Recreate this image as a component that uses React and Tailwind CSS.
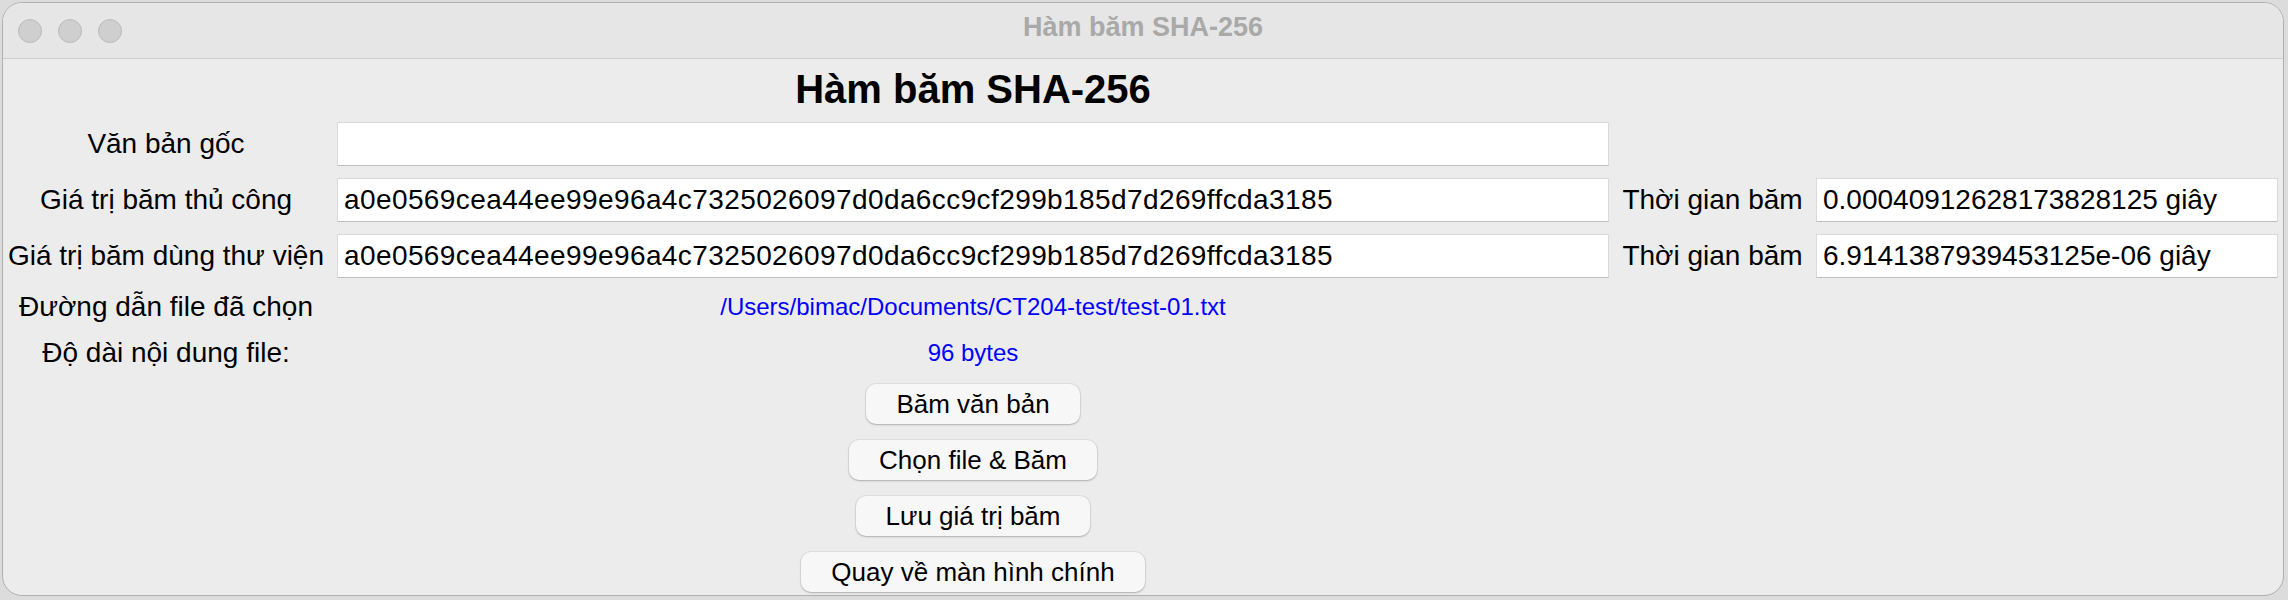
export default function App() {
  const hash = 'a0e0569cea44ee99e96a4c7325026097d0da6cc9cf299b185d7d269ffcda3185';

  const label = 'flex items-center justify-center pr-[8px] text-[28px] text-black whitespace-nowrap';
  const fieldCell = 'py-[6px]';
  const field =
    'h-full bg-white border border-[#dadada] border-b-[#bdbdbd] pl-[6px] flex items-center text-[28px] text-black whitespace-nowrap overflow-hidden';
  const btnCell = 'col-start-2 flex items-center justify-center';
  const btn =
    'h-[40px] px-[30px] rounded-[10px] bg-[#f7f7f7] text-[26px] text-black shadow-[0_0_0_1px_rgba(0,0,0,0.05),0_1px_2px_rgba(0,0,0,0.22)]';

  return (
    <div className="w-[2288px] h-[600px] bg-[#dcdcdc] pt-[2px] pl-[2px] overflow-hidden font-['Liberation_Sans',Arial,sans-serif]">
      <div className="w-[2282px] h-[594px] rounded-[20px] border border-[#b0b0b0] bg-[#ececec] overflow-hidden flex flex-col">
        {/* title bar */}
        <div className="h-[56px] shrink-0 bg-[#e6e6e6] border-b border-[#cdcdcd] grid grid-cols-[1fr_auto_1fr] items-center">
          <div className="flex items-center gap-[16px] pl-[15px]">
            <span className="w-[24px] h-[24px] rounded-full bg-[#cfcfcf] border border-[#b9b9b9]" />
            <span className="w-[24px] h-[24px] rounded-full bg-[#cfcfcf] border border-[#b9b9b9]" />
            <span className="w-[24px] h-[24px] rounded-full bg-[#cfcfcf] border border-[#b9b9b9]" />
          </div>
          <div className="pb-[7px] text-[27px] font-bold text-[#a9a9a9] whitespace-nowrap">Hàm băm SHA-256</div>
          <div />
        </div>

        {/* content */}
        <div className="grid grid-cols-[334px_1272px_207px_462px] grid-rows-[57px_56px_56px_56px_46px_46px_56px_56px_56px_56px] shrink-0">
          <div className="col-start-2 text-center pt-[6px] text-[40px] leading-[48px] font-bold text-black">
            Hàm băm SHA-256
          </div>
          <div />
          <div />

          <div className={label}>Văn bản gốc</div>
          <div className={fieldCell}>
            <div className={field}></div>
          </div>
          <div />
          <div />

          <div className={label}>Giá trị băm thủ công</div>
          <div className={fieldCell}>
            <div className={field + ' tracking-[0.4px]'}>{hash}</div>
          </div>
          <div className="flex items-center justify-center text-[28px] text-black whitespace-nowrap">Thời gian băm</div>
          <div className={fieldCell}>
            <div className={field}>0.00040912628173828125 giây</div>
          </div>

          <div className={label}>Giá trị băm dùng thư viện</div>
          <div className={fieldCell}>
            <div className={field + ' tracking-[0.4px]'}>{hash}</div>
          </div>
          <div className="flex items-center justify-center text-[28px] text-black whitespace-nowrap">Thời gian băm</div>
          <div className={fieldCell}>
            <div className={field}>6.9141387939453125e-06 giây</div>
          </div>

          <div className={label}>Đường dẫn file đã chọn</div>
          <div className="flex items-center justify-center text-[24px] text-[#0000ff] whitespace-nowrap">
            /Users/bimac/Documents/CT204-test/test-01.txt
          </div>
          <div />
          <div />

          <div className={label}>Độ dài nội dung file:</div>
          <div className="flex items-center justify-center text-[24px] text-[#0000ff]">96 bytes</div>
          <div />
          <div />

          <div className={btnCell}>
            <button className={btn}>Băm văn bản</button>
          </div>
          <div className={btnCell + ' row-start-8'}>
            <button className={btn}>Chọn file &amp; Băm</button>
          </div>
          <div className={btnCell + ' row-start-9'}>
            <button className={btn}>Lưu giá trị băm</button>
          </div>
          <div className={btnCell + ' row-start-10'}>
            <button className={btn}>Quay về màn hình chính</button>
          </div>
        </div>
      </div>
    </div>
  );
}
